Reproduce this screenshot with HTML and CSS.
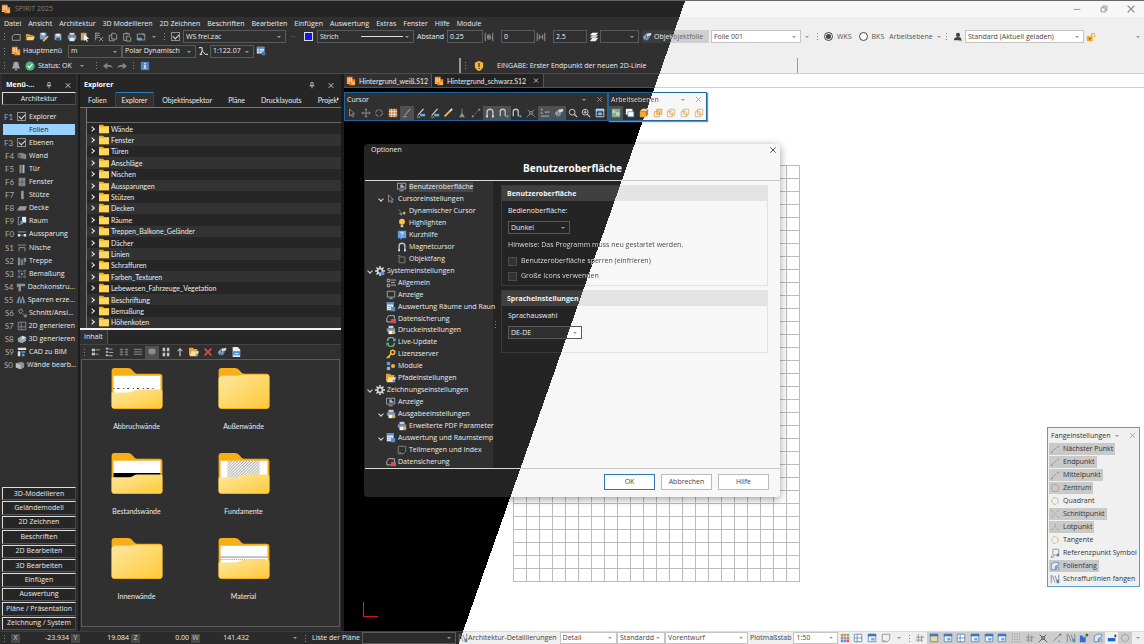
FILE: index.html
```html
<!DOCTYPE html>
<html lang="de">
<head>
<meta charset="utf-8">
<title>SPIRIT 2025</title>
<link rel="stylesheet" href="styles.css">
</head>
<body>
<svg class="sprite" aria-hidden="true">
  <symbol id="logo" viewBox="0 0 12 12"><path fill="#f08a24" d="M1 1h7v3h3v7H4V9H1z"/><path stroke="#fff" stroke-width=".8" d="M2.500 2.500v5M4.500 2.500v5M6.500 2.500v5M1 9h3"/><circle cx="8.700" cy="8.700" r="2" fill="#ffb45c"/></symbol>
  <symbol id="new" viewBox="0 0 12 12"><path fill="none" stroke="currentColor" d="M4 3h7v7H1.500V5z"/></symbol>
  <symbol id="open" viewBox="0 0 12 12"><path fill="#d9962a" d="M1 2.500h4l1 1h4V5H3L1 10z"/><path fill="#ffd479" d="M3.200 5.500H12L10 10H1.500z"/></symbol>
  <symbol id="save" viewBox="0 0 12 12"><path fill="#8fa9c9" d="M2 2h8v8H3L2 9z"/><path fill="#e9eef5" d="M4 2h4v3H4z"/><path fill="#35506f" d="M4 7h4v3H4z"/></symbol>
  <symbol id="saveas" viewBox="0 0 12 12"><path fill="#6f9bd1" d="M1 1h8v8H2L1 8z"/><path fill="#e9eef5" d="M3 1h4v3H3z"/><path stroke="#ffc04d" stroke-width="1.800" d="M5 11l6-6"/></symbol>
  <symbol id="print" viewBox="0 0 12 12"><path fill="#c8d2dd" d="M3 1h6v3H3z"/><path fill="#7d91aa" d="M1 4h10v5H1z"/><path fill="#e9eef5" d="M3 7h6v4H3z"/><path fill="#4f8fdb" d="M8 5h2v1H8z"/></symbol>
  <symbol id="printset" viewBox="0 0 12 12"><path fill="#c8d2dd" d="M3 1h6v3H3z"/><path fill="#8797aa" d="M1 4h10v4H1z"/><path fill="#f2f5f8" d="M3 7h5v4H3z"/><circle cx="9.300" cy="9" r="2" fill="#e8b04c"/></symbol>
  <symbol id="pastecur" viewBox="0 0 12 12"><path fill="#c9a46a" d="M1 1h7v9H1z"/><path fill="#fff" d="M5 3l6 5-3 .3 1.500 3-1.300.5L7 9l-2 1.500z"/></symbol>
  <symbol id="cutx" viewBox="0 0 12 12"><path fill="none" stroke="currentColor" d="M2 1.500h5M2 4h5M2 6.500h3M2 1v9M6 6l5 5M11 6l-5 5"/></symbol>
  <symbol id="copy" viewBox="0 0 12 12"><path fill="none" stroke="currentColor" d="M4.500 1.500h4l2 2v5h-6zM4 4H1.500v6.500h6V9"/></symbol>
  <symbol id="paste" viewBox="0 0 12 12"><path fill="none" stroke="currentColor" d="M5 10H2V2h7v2M4 1.500h3M5.500 5h3l2 2v4h-5z"/></symbol>
  <symbol id="export" viewBox="0 0 12 12"><path fill="none" stroke="currentColor" d="M1.500 2.500h9v7h-9z"/><path fill="#6f9bd1" d="M2 7h5v3H2zM8 1l3 3H8z"/></symbol>
  <symbol id="bwide" viewBox="0 0 12 12"><path fill="none" stroke="currentColor" d="M1.500 1v10M10.500 1v10M4.500 3.500h2a1 1 0 010 2.500h-2zM4.500 6h2.500a1 1 0 010 2.500h-2.500z"/></symbol>
  <symbol id="hwide" viewBox="0 0 12 12"><path fill="none" stroke="currentColor" d="M1.500 1v10M10.500 1v10M4 3v6M8 3v6M4 6h4"/></symbol>
  <symbol id="layers" viewBox="0 0 12 12"><path fill="#fff" d="M4 1h7L8 4H1z"/><path fill="#d5dde2" d="M4 4h7L8 7H1z"/><path fill="#e6ece6" d="M4 7h7l-3 4H1z"/></symbol>
  <symbol id="folie" viewBox="0 0 12 12"><path fill="#8fa0ad" d="M1 6l4-4v5l-2 3z"/><path fill="#c4d9ea" d="M5 2l6-1v3L6 6z"/><path fill="#5e93c4" d="M5 6l5-1-3 5H4z"/></symbol>
  <symbol id="person" viewBox="0 0 12 12"><circle cx="6" cy="3.500" r="2.500" fill="#444"/><path fill="#444" d="M1 10c0-3 2-4 5-4s4 1 4 3v1z"/><path stroke="#4fae5a" d="M7 10.500h4"/></symbol>
  <symbol id="lock" viewBox="0 0 12 12"><path fill="#f0a92c" d="M1 5h7v6H1z"/><path fill="none" stroke="#f0a92c" stroke-width="1.300" d="M6.500 5V3.500a2 2 0 014 0V6"/><circle cx="4.500" cy="8" r="1" fill="#8a5a0a"/></symbol>
  <symbol id="scale" viewBox="0 0 12 12"><path fill="none" stroke="currentColor" stroke-width="1.200" d="M1 2h4v4l-2 4M5 6l4 4h3M2 10h3"/></symbol>
  <symbol id="tableset" viewBox="0 0 12 12"><path fill="#dfe7ef" d="M1 1h9v8H1z"/><path fill="#4f8fdb" d="M1 1h9v2.500H1z"/><path stroke="#778" stroke-width=".8" d="M1 6h9M4 3v6"/><circle cx="9" cy="9" r="2.500" fill="#3d79bd"/></symbol>
  <symbol id="bell" viewBox="0 0 12 12"><path fill="#a5a5a5" d="M6 1c3 0 3.500 2 3.500 5L11 9H1l1.500-3C2.500 3 3 1 6 1zM4.500 9.500h3V11h-3z"/></symbol>
  <symbol id="ok" viewBox="0 0 12 12"><circle cx="6" cy="6" r="5.500" fill="#49b97a"/><path fill="none" stroke="#fff" stroke-width="1.500" d="M3.300 6l2 2 3.500-4"/></symbol>
  <symbol id="undo" viewBox="0 0 12 12"><path fill="#858585" d="M0 6l5-4v2.500c4 0 6 1 7 4-2-1.500-4-1.500-7-1.500V10z"/></symbol>
  <symbol id="redo" viewBox="0 0 12 12"><path fill="#858585" d="M12 6L7 2v2.500c-4 0-6 1-7 4C2 7 4 7 7 7v3z"/></symbol>
  <symbol id="info" viewBox="0 0 12 12"><path fill="#4c84c4" d="M1 1h10v10H1z"/><path fill="#fff" d="M5.300 2h1.500v1.500H5.300zM4.500 4.500h2.300V8H8v1H4.300V8h1V5.500h-.8z"/></symbol>
  <symbol id="warn" viewBox="0 0 12 12"><path fill="#f3b63b" d="M6 0l5 2v4c0 3-2 5-5 6-3-1-5-3-5-6V2z"/><path fill="#333" d="M5.300 2.500h1.500v4.500H5.300zM5.300 8h1.500v1.500H5.300z"/></symbol>
  <symbol id="pin" viewBox="0 0 12 12"><path fill="none" stroke="currentColor" stroke-width="1.200" d="M4 1h4v5H4zM2 6.500h8M6 7v4"/></symbol>
  <symbol id="close" viewBox="0 0 12 12"><path fill="none" stroke="currentColor" stroke-width="1.500" d="M2 2l8 8M10 2l-8 8"/></symbol>
  <symbol id="min" viewBox="0 0 12 12"><path stroke="currentColor" d="M2 6.500h8"/></symbol>
  <symbol id="restore" viewBox="0 0 12 12"><path fill="none" stroke="currentColor" d="M2.500 4.500h5v5h-5zM4.500 4V2.500h5v5H8"/></symbol>
  <symbol id="wall" viewBox="0 0 12 12"><path fill="#85898e" d="M1 3l4-1 6 2v6l-5-1-5-1z"/><path fill="#63676c" d="M1 3l4 1v5L1 8z"/></symbol>
  <symbol id="door" viewBox="0 0 12 12"><path fill="#8c9094" d="M3 1h2.500v10H3z"/><path fill="#aeb3b8" d="M6.500 1H9v10H6.500z"/></symbol>
  <symbol id="win" viewBox="0 0 12 12"><path fill="#85898e" d="M2 1h8v10H2z"/><path stroke="#5b5f63" d="M6 1v10M2 6h8"/></symbol>
  <symbol id="column" viewBox="0 0 12 12"><path fill="#989ca0" d="M5 1h3v10H5z"/></symbol>
  <symbol id="slab" viewBox="0 0 12 12"><path fill="#989ca0" d="M3 4h9l-2 5H0z"/></symbol>
  <symbol id="room" viewBox="0 0 12 12"><path fill="none" stroke="#9aa" d="M4 1.500H1.500v9H4"/><path fill="#d9e6f2" d="M6 1h5v7H6z"/><path fill="#5c9bd8" d="M4 6h3v4H4z"/></symbol>
  <symbol id="opening" viewBox="0 0 12 12"><path stroke="#aaa" d="M1 3.500h10"/><path fill="#d9e6f2" d="M1 6h3v3H1zM8 6h3v3H8z"/><path stroke="#5c9bd8" d="M4 7.500h4"/></symbol>
  <symbol id="niche" viewBox="0 0 12 12"><path fill="none" stroke="#9aa0a8" d="M1 2.500h10M2.500 10V5.500h7V10"/></symbol>
  <symbol id="stairs" viewBox="0 0 12 12"><path fill="#858a92" d="M1 2h3v9H1zM5 4h2v7H5zM8 2h3v5H9v4H8z"/></symbol>
  <symbol id="dim" viewBox="0 0 12 12"><path fill="none" stroke="#7fa7d3" stroke-dasharray="2 1" d="M1 2.500h10M1 9.500h10M2.500 1v10M9.500 1v10"/><path fill="#b9c6d4" d="M5 5h2v2H5z"/></symbol>
  <symbol id="roof" viewBox="0 0 12 12"><path fill="#8a8f95" d="M1 2h10v3H6v6H3V6H1z"/></symbol>
  <symbol id="rafter" viewBox="0 0 12 12"><path fill="none" stroke="#8da6c8" d="M1 10L4 2l2 8 2-8 3 8M3 10V4M9 10V5"/></symbol>
  <symbol id="section" viewBox="0 0 12 12"><path fill="none" stroke="#a5abb2" d="M2 3l3-2 2 3-3 3zM7 7l4 3M8 10.500h3V7"/></symbol>
  <symbol id="gen2d" viewBox="0 0 12 12"><path fill="none" stroke="#9299a5" d="M1.500 1.500h9v9h-9zM5 2v5h5M2 7h3v3"/></symbol>
  <symbol id="gen3d" viewBox="0 0 12 12"><path fill="#9aa5b0" d="M1 5l5-3 5 2v4l-5 3-5-2z"/><path fill="#d7dee5" d="M6 2l5 2-5 3z"/></symbol>
  <symbol id="bim" viewBox="0 0 12 12"><path fill="#d8e0e8" d="M1 1h10v2.500H1zM1 5h3v6H1z"/><path fill="#5c9bd8" d="M5 5h5v2H5zM6 8h3v3H6z"/></symbol>
  <symbol id="editwall" viewBox="0 0 12 12"><path fill="#8c9094" d="M1 4l7-2 3 2v5l-4 2-6-2z"/><path fill="#b7bcc1" d="M1 4l6 2v5L1 9z"/></symbol>
  <symbol id="folder" viewBox="0 0 12 12"><path fill="#f5b21c" d="M0 1h5l1 1.500h6V11H0z"/><path fill="#ffd65c" d="M0 3.500h12V11H0z"/></symbol>
  <symbol id="list1" viewBox="0 0 12 12"><path fill="#c5c5c5" d="M1 2h4v3H1zM1 7h4v3H1zM6 3h5v1H6zM6 8h3v1H6z"/></symbol>
  <symbol id="list2" viewBox="0 0 12 12"><path fill="#c5c5c5" d="M1 1h3v2H1zM1 5h3v2H1zM1 9h3v2H1zM5 2h4v1H5zM5 6h5v1H5zM5 10h4v1H5z"/></symbol>
  <symbol id="list3" viewBox="0 0 12 12"><path fill="#777" d="M1 2h4v2H1zM7 2h4v2H7zM1 5h4v2H1zM7 5h4v2H7zM1 8h4v2H1zM7 8h4v2H7z"/></symbol>
  <symbol id="list4" viewBox="0 0 12 12"><path fill="#777" d="M1 2h10v1.500H1zM1 5h10v1.500H1zM1 8h10v1.500H1z"/></symbol>
  <symbol id="preview" viewBox="0 0 12 12"><path fill="#8e8e8e" d="M2 2h8v6H2zM4 9h4v1H4z"/></symbol>
  <symbol id="grid4" viewBox="0 0 12 12"><path fill="#c5c5c5" d="M2 1h3v4H2zM7 1h3v4H7zM2 7h3v4H2zM7 7h3v4H7z"/></symbol>
  <symbol id="up" viewBox="0 0 12 12"><path fill="none" stroke="currentColor" stroke-width="1.200" d="M6 11V2M3 5l3-3 3 3"/></symbol>
  <symbol id="delete" viewBox="0 0 12 12"><path stroke="#e0464c" stroke-width="2.200" d="M2 2l8 8M10 2l-8 8"/></symbol>
  <symbol id="docimg" viewBox="0 0 12 12"><path fill="#e8edf2" d="M2 0h6l3 3v9H2z"/><path fill="#4f8fdb" d="M2 5h9v5H2z"/><path stroke="#fff" d="M4 8h5"/></symbol>
  <symbol id="pointer" viewBox="0 0 12 12"><path fill="none" stroke="#999" d="M3 1l6 6H6.500l1.500 3-1.500.5L5 8 3 9.500z"/></symbol>
  <symbol id="move" viewBox="0 0 12 12"><path fill="none" stroke="currentColor" d="M6 1v10M1 6h10M4.500 2.500L6 1l1.500 1.500M4.500 9.500L6 11l1.500-1.500M2.500 4.500L1 6l1.500 1.500M9.500 4.500L11 6 9.500 7.500"/></symbol>
  <symbol id="rot" viewBox="0 0 12 12"><circle cx="6" cy="6" r="4" fill="none" stroke="currentColor" stroke-dasharray="5 1.300"/></symbol>
  <symbol id="gridor" viewBox="0 0 12 12"><path fill="#c98d55" d="M1 1h10v10H1z"/><path stroke="#f2e6d8" stroke-width=".9" d="M1 4.300h10M1 7.600h10M4.300 1v10M7.600 1v10"/></symbol>
  <symbol id="pen" viewBox="0 0 12 12"><path fill="none" stroke="currentColor" stroke-width="1.300" d="M3 9l7-8M1 10.500h5"/></symbol>
  <symbol id="penline" viewBox="0 0 12 12"><path stroke="#e8dfcf" stroke-width="1.300" d="M2 9l7-8"/><path fill="#6ba7ec" d="M5 7h6v3H5z"/><path stroke="#e6b04a" d="M1 11h4"/></symbol>
  <symbol id="penor" viewBox="0 0 12 12"><path stroke="#ffb938" stroke-width="2.200" d="M2 10l6-6"/><path stroke="#f3e0b0" stroke-width="2.200" d="M8 4l3-3"/></symbol>
  <symbol id="broom" viewBox="0 0 12 12"><path fill="#8f8f8f" d="M5.500 1h1v5l3 5h-7l3-5z"/></symbol>
  <symbol id="dash" viewBox="0 0 12 12"><path fill="none" stroke="currentColor" stroke-dasharray="2 2" d="M2 10l8-8"/><path fill="currentColor" d="M1 9h2v2H1zM9 1h2v2H9z"/></symbol>
  <symbol id="magnet" viewBox="0 0 12 12"><path fill="none" stroke="#b8c2d0" stroke-width="1.700" d="M2.500 11V5a3.500 3.500 0 017 0v6"/><path stroke="#fff" stroke-width="1.700" d="M2.500 9v2M9.500 9v2"/></symbol>
  <symbol id="magdot" viewBox="0 0 12 12"><path fill="none" stroke="#b8c2d0" stroke-width="1.600" d="M1.500 10V4.500a3 3 0 016 0V10"/><circle cx="10" cy="10" r="1.300" fill="#6ba7ec"/></symbol>
  <symbol id="cross" viewBox="0 0 12 12"><path fill="none" stroke="currentColor" d="M2 2l3 3M10 2L7 5M5 7l-4 4M7 7l4 4M4.500 4.500h3v3h-3z"/></symbol>
  <symbol id="snap" viewBox="0 0 12 12"><path fill="#7fa7d3" d="M1 1h2v2H1zM1 5h2v2H1zM1 9h10v1.500H1zM6 4h2v2H6zM9 4h2v2H9z"/></symbol>
  <symbol id="zoom" viewBox="0 0 12 12"><circle cx="5" cy="5" r="3.500" fill="none" stroke="#c4c4c4" stroke-width="1.200"/><path stroke="#c4c4c4" stroke-width="1.500" d="M7.500 7.500L11 11"/></symbol>
  <symbol id="zoomin" viewBox="0 0 12 12"><circle cx="5" cy="5" r="3.500" fill="none" stroke="#c4c4c4" stroke-width="1.200"/><path stroke="#c4c4c4" stroke-width="1.300" d="M7.500 7.500L11 11M3 5h4M5 3v4"/></symbol>
  <symbol id="viewbox" viewBox="0 0 12 12"><path fill="#7fb2e6" d="M1 1h10v3H1z"/><path fill="none" stroke="#d8e4f0" d="M1.500 1.500h9v9h-9z"/><ellipse cx="6" cy="7" rx="3" ry="2" fill="#7fb2e6"/></symbol>
  <symbol id="green" viewBox="0 0 12 12"><path fill="#7fb28e" d="M1 1h10v10H1z"/><path fill="#bcdcc4" d="M2 3h3v3H2zM6 5h4v4H6z"/></symbol>
  <symbol id="planes" viewBox="0 0 12 12"><path fill="#e9f1fa" d="M1 1h8v7H1z"/><path fill="#fff" stroke="#6b98cf" d="M3.500 4.500h7v6h-7z"/></symbol>
  <symbol id="cubefull" viewBox="0 0 12 12"><path fill="#eda93c" d="M1 4h7v7H1z"/><path fill="#f8d08c" d="M1 4l3-3h7L8 4z"/><path fill="#bf7f24" d="M8 4l3-3v7l-3 3z"/></symbol>
  <symbol id="cube" viewBox="0 0 12 12"><path fill="#fbd28a" stroke="#d99a3c" d="M4.500 1.500h6v6h-6z"/><path fill="none" stroke="#d99a3c" d="M1.500 4.500h6v6h-6z"/></symbol>
  <symbol id="cubeline" viewBox="0 0 12 12"><path fill="none" stroke="#dfae6a" d="M1.500 4.500h6v6h-6zM4.500 1.500h6v6h-6zM1.500 4.500l3-3M7.500 10.500l3-3"/></symbol>
  <symbol id="monitor" viewBox="0 0 12 12"><path fill="none" stroke="#b5b5b5" d="M1.500 1.500h9v7h-9zM4 10.500h4M6 9v1"/></symbol>
  <symbol id="monitorset" viewBox="0 0 12 12"><path fill="none" stroke="#b5b5b5" d="M.5 1.500h10v7H.5zM3 10.500h5"/><path fill="#9db9dc" d="M4 3h3v2h2v2H4z"/></symbol>
  <symbol id="dyn" viewBox="0 0 12 12"><path fill="none" stroke="#76808c" d="M2 4l4 5M2 9h3"/><path fill="#e8b04c" d="M7 7h3v3H7z"/><path fill="#6ba7ec" d="M4 9h2v2H4z"/></symbol>
  <symbol id="bulb" viewBox="0 0 12 12"><circle cx="6" cy="4.500" r="3.500" fill="#ffbf4d"/><path fill="#d8d8d8" d="M4.500 8.500h3V11h-3z"/></symbol>
  <symbol id="help" viewBox="0 0 12 12"><path fill="#5da0ea" d="M1 1h10v9H6l-2 2v-2H1z"/><path fill="none" stroke="#fff" stroke-width="1.100" d="M4.500 4a1.500 1.500 0 113 0c0 1-1.500 1-1.500 2M6 7v1"/></symbol>
  <symbol id="square" viewBox="0 0 12 12"><path fill="none" stroke="#8a8a8a" d="M2.500 3.500h7v7h-7zM1 2h3"/></symbol>
  <symbol id="gear" viewBox="0 0 12 12"><circle cx="6" cy="6" r="3" fill="none" stroke="#d5dae0" stroke-width="2"/><path stroke="#d5dae0" stroke-width="1.800" d="M6 0v2.500M6 9.500V12M0 6h2.500M9.500 6H12M1.800 1.800l1.700 1.700M8.500 8.500l1.700 1.700M10.200 1.800L8.500 3.500M3.500 8.500l-1.700 1.700"/></symbol>
  <symbol id="gearblue" viewBox="0 0 12 12"><use href="#gear"/><circle cx="9" cy="9" r="2.500" fill="#4f8fdb"/></symbol>
  <symbol id="options" viewBox="0 0 12 12"><path fill="none" stroke="#c4c4c4" d="M1.500 1.500h3v3h-3zM1.500 7.500h3v3h-3zM6 2.500h6M6 5.500h5M6 8.500h6"/></symbol>
  <symbol id="eval" viewBox="0 0 12 12"><path fill="#e6ecf3" d="M1 0h8v10H1z"/><path fill="#4f8fdb" d="M1 0h8v3H1zM6 6h5v5H6z"/><path stroke="#8aa" d="M2 5.500h5M2 8h3"/></symbol>
  <symbol id="backup" viewBox="0 0 12 12"><path fill="none" stroke="#c9c9c9" d="M1 9.500V5l2-3h7v4M1 9.500h5"/><path fill="#e2474d" d="M6 6h6v5H6z"/></symbol>
  <symbol id="refresh" viewBox="0 0 12 12"><path fill="none" stroke="#5fb386" stroke-width="1.800" d="M2 5a4 4 0 018-1M10 7a4 4 0 01-8 1"/><path fill="#5fb386" d="M11.500 1v4H8zM.5 11V7H4z"/></symbol>
  <symbol id="key" viewBox="0 0 12 12"><circle cx="8" cy="4" r="2.500" fill="none" stroke="#ffb938" stroke-width="1.800"/><path stroke="#ffb938" stroke-width="1.800" d="M6 6l-5 5M3 9l1.500 1.500"/></symbol>
  <symbol id="modules" viewBox="0 0 12 12"><path fill="#6b9bd4" d="M1 1h4v4H1z"/><path fill="#9fb4cc" d="M1 7h4v4H1z"/><circle cx="8.500" cy="6" r="2.500" fill="#f0b04a"/></symbol>
  <symbol id="folderset" viewBox="0 0 12 12"><path fill="#e1a33c" d="M0 1h5l1 1.500h4V10H0z"/><path fill="#ffdf94" d="M3 5h9l-2 6H1z"/><path fill="#5c9bd8" d="M8 8h3v3H8z"/></symbol>
  <symbol id="note" viewBox="0 0 12 12"><path fill="none" stroke="#8f8f8f" d="M1.500 1.500h9v6l-3 3h-6zM3 9l3 1"/></symbol>
  <symbol id="near" viewBox="0 0 12 12"><path fill="none" stroke="#a69583" d="M3 9l5-5"/><path fill="#a69583" d="M1 9h2v2H1zM9 2h2v2H9z"/></symbol>
  <symbol id="circ" viewBox="0 0 12 12"><circle cx="6" cy="6" r="4.500" fill="none" stroke="#a69c90"/></symbol>
  <symbol id="quad" viewBox="0 0 12 12"><circle cx="6" cy="6" r="4" fill="none" stroke="#c9a56a" stroke-dasharray="4 1"/></symbol>
  <symbol id="inter" viewBox="0 0 12 12"><path fill="none" stroke="#999" d="M1 1l3 3M11 1L8 4M1 11l3-3M11 11L8 8M5 6h2"/></symbol>
  <symbol id="perp" viewBox="0 0 12 12"><path fill="none" stroke="#999" d="M6 2v5M1 10l3-2M11 10L8 8"/></symbol>
  <symbol id="refpt" viewBox="0 0 12 12"><path fill="none" stroke="#8a8a8a" d="M3.500 1.500h7v7h-7zM1 11h4M2 9v3"/><path fill="#5c80b0" d="M8 7h3v3H8z"/></symbol>
  <symbol id="foliefang" viewBox="0 0 12 12"><path fill="#dbe8f5" stroke="#5b86b8" d="M1.500 3.500l4-2h5v3l-4 2v4h-5z"/><path fill="none" stroke="#5b86b8" d="M7.500 11V8.500a1.500 1.500 0 013 0V11"/></symbol>
  <symbol id="hatch" viewBox="0 0 12 12"><path fill="none" stroke="#6f7f93" d="M1.500 1v10M3 2l3 8M6 2l3 8M10.500 1v10"/><path fill="#5b86b8" d="M8 7h3v4H8z"/></symbol>
  <symbol id="palette" viewBox="0 0 12 12"><path fill="#e2803f" d="M1 1h5v5H1z"/><path fill="#6abf69" d="M6 1h5v5H6z"/><path fill="#5c8fe0" d="M1 6h5v5H1z"/><path fill="#e25b50" d="M6 6h5v5H6z"/><path stroke="#fff" stroke-width=".6" d="M1 4.300h10M1 7.600h10M4.300 1v10M7.600 1v10"/></symbol>
  <symbol id="win3" viewBox="0 0 12 12"><path fill="#fff" stroke="#5d83b5" d="M1.500 1.500h9v9h-9zM5 2v9M2 6h9"/></symbol>
  <symbol id="winb" viewBox="0 0 12 12"><path fill="#eef4fb" stroke="#5b86bd" d="M1.500 1.500h9v9h-9z"/><path fill="#3f78c0" d="M1 1h10v3H1z"/><path fill="#7ea6d6" d="M5 6h4v3H5z"/></symbol>
  <symbol id="winy" viewBox="0 0 12 12"><path fill="#f6d98b" stroke="#5b86bd" d="M1.500 1.500h9v9h-9z"/><path fill="#3f78c0" d="M1 1h10v3H1z"/></symbol>
  <symbol id="dots" viewBox="0 0 12 12"><path fill="none" stroke="#777" stroke-dasharray="1 2" d="M1.500 1v11M4.500 1v11M7.500 1v11M10.500 1v11"/></symbol>
  <symbol id="hash" viewBox="0 0 12 12"><path fill="none" stroke="#888" d="M4 1v10M8 3v8M1 5h10M1 8.500h8"/></symbol>
  <symbol id="edge" viewBox="0 0 12 12"><path fill="none" stroke="#6e7f96" d="M2 10l3-4 4-3M7 9l3 2"/><path fill="#555" d="M9 1h2v2H9z"/></symbol>
  <symbol id="bluewin" viewBox="0 0 12 12"><path fill="#2f6fd0" d="M1 3h3l2 3 2-3v8H1z"/><path fill="#555" d="M8 1h3v3H8z"/></symbol>
  <symbol id="screen" viewBox="0 0 12 12"><path fill="#1f62d6" d="M1 6h9v4H1z"/><path fill="#333" d="M9 2h2v3H9z"/></symbol>
  <linearGradient id="front" x1="0" y1="0" x2="1" y2="1"><stop offset="0" stop-color="#fde7a0"/><stop offset="1" stop-color="#ffca38"/></linearGradient>
  <pattern id="diag" width="3" height="3" patternUnits="userSpaceOnUse"><path stroke="#555" stroke-width=".7" d="M0 3l3-3"/></pattern>
  <symbol id="big" viewBox="0 0 54 44"><path fill="#f7ae17" d="M1 4q0-3 3-3h14q3 0 5 3t4 3h23q3 0 3 3v30q0 3-3 3H4q-3 0-3-3z"/></symbol>
  <symbol id="fclosed" viewBox="0 0 54 44"><use href="#big" width="54" height="44"/><path fill="#fff3cf" d="M3 9h20l3-1v2H3z"/><path fill="url(#front)" d="M1 12q0-2 2-2h15l6-2h27q2 0 2 2v30q0 2-2 2H3q-2 0-2-2z"/></symbol>
  <symbol id="ffront" viewBox="0 0 54 44"><path fill="url(#front)" d="M1 26h17q3 0 5-1.500t5-1.500h23q2 0 2 2v15q0 2-2 2H3q-2 0-2-2z"/></symbol>
</svg>

<header class="titlebar split">
  <svg class="i"><use href="#logo"/></svg><span class="apptitle">SPIRIT 2025</span>
  <div class="wincontrols">
    <button aria-label="Minimieren"><svg class="i"><use href="#min"/></svg></button>
    <button aria-label="Wiederherstellen"><svg class="i"><use href="#restore"/></svg></button>
    <button aria-label="Schließen"><svg class="i"><use href="#close"/></svg></button>
  </div>
</header>

<div class="ribbon split">
  <nav class="menubar">
    <button>Datei</button><button>Ansicht</button><button>Architektur</button><button>3D Modellieren</button><button>2D Zeichnen</button><button>Beschriften</button><button>Bearbeiten</button><button>Einfügen</button><button>Auswertung</button><button>Extras</button><button>Fenster</button><button>Hilfe</button><button>Module</button>
  </nav>
  <div class="toolbar">
    <div class="group g-file"><i class="grip"></i>
      <button class="tb" aria-label="Neu"><svg class="i"><use href="#new"/></svg></button>
      <button class="tb" aria-label="Öffnen"><svg class="i"><use href="#open"/></svg></button>
      <button class="tb" aria-label="Speichern unter"><svg class="i"><use href="#saveas"/></svg></button>
      <button class="tb" aria-label="Speichern"><svg class="i"><use href="#save"/></svg></button>
      <button class="tb" aria-label="Drucken"><svg class="i"><use href="#print"/></svg></button>
      <button class="tb" aria-label="Auswahl einfügen"><svg class="i"><use href="#pastecur"/></svg></button>
      <button class="tb" aria-label="Ausschneiden"><svg class="i"><use href="#cutx"/></svg></button>
      <button class="tb" aria-label="Kopieren"><svg class="i"><use href="#copy"/></svg></button>
      <button class="tb" aria-label="Einfügen"><svg class="i"><use href="#paste"/></svg></button>
      <button class="tb" aria-label="Exportieren"><svg class="i"><use href="#export"/></svg></button>
      <i class="caret"></i></div>
    <div class="group g-pen"><i class="grip"></i><input class="check" type="checkbox" checked aria-label="Stift aktiv">
      <span class="combo grow"><select aria-label="Stiftdatei"><option>WS frei.zac</option></select></span>
      <button class="tb dim">···</button></div>
    <div class="group g-line"><i class="swatch"></i><span class="combo grow stroke"><select aria-label="Linienart"><option>Strich</option></select></span></div>
    <div class="group g-dist"><label for="dist">Abstand</label><input class="field" id="dist" value="0.25"></div>
    <div class="group g-val"><label for="bw" aria-label="Breite"><svg class="i"><use href="#bwide"/></svg></label><input class="field" id="bw" value="0"></div>
    <div class="group g-val"><label for="hw" aria-label="Höhe"><svg class="i"><use href="#hwide"/></svg></label><input class="field" id="hw" value="2.5"></div>
    <div class="group g-layer"><svg class="i"><use href="#layers"/></svg><span class="combo grow"><select aria-label="Ebene"><option></option></select></span></div>
    <button class="objfolie split"><svg class="i"><use href="#folie"/></svg><span>Objek<span class="on-light">bjektfolie</span></span></button>
    <div class="group g-folie light"><span class="combo grow"><select aria-label="Folie"><option>Folie 001</option></select></span><i class="caret"></i></div>
    <div class="group g-coord light"><i class="grip"></i><label><input class="radio" type="radio" name="cs" checked>WKS</label><label><input class="radio" type="radio" name="cs">BKS</label><span>Arbeitsebene</span><i class="caret"></i></div>
    <div class="group g-user light"><i class="grip"></i><svg class="i"><use href="#person"/></svg><span class="combo grow"><select aria-label="Profil"><option>Standard (Aktuell geladen)</option></select></span><svg class="i"><use href="#lock"/></svg></div>
    <i class="caret light end"></i>
  </div>
  <div class="toolbar mid">
    <i class="grip"></i><button class="tb" aria-label="SPIRIT"><svg class="i"><use href="#logo"/></svg></button>
    <label class="w-menu" for="unit">Hauptmenü</label>
    <span class="combo w-unit"><select id="unit"><option>m</option></select></span><span class="combo w-polar"><select aria-label="Koordinaten"><option>Polar Dynamisch</option></select></span>
    <button class="tb" aria-label="Maßstab"><svg class="i"><use href="#scale"/></svg></button>
    <span class="combo w-scale"><select aria-label="Zoomfaktor"><option>1:122.07</option></select></span>
    <button class="tb" aria-label="Tabelle"><svg class="i"><use href="#tableset"/></svg></button>
  </div>
  <div class="toolbar">
    <div class="group g-status"><i class="grip"></i>
      <button class="tb" aria-label="Meldungen"><svg class="i"><use href="#bell"/></svg></button>
      <svg class="i ic"><use href="#ok"/></svg><span>Status: OK</span><i class="caret wide"></i><i class="grip"></i>
      <button class="tb" aria-label="Rückgängig"><svg class="i"><use href="#undo"/></svg></button>
      <button class="tb" aria-label="Wiederholen"><svg class="i"><use href="#redo"/></svg></button><i class="grip"></i>
      <button class="tb" aria-label="Info"><svg class="i"><use href="#info"/></svg></button></div>
    <div class="prompt"><i class="grip"></i><svg class="i"><use href="#warn"/></svg><span>EINGABE: Erster Endpunkt der neuen 2D-Linie</span></div>
  </div>
</div>

<main class="main">
  <aside class="menupanel">
    <div class="phead"><b>Menü-...</b><svg class="i"><use href="#pin"/></svg><button aria-label="Schließen"><svg class="i"><use href="#close"/></svg></button></div>
    <button class="mbtn">Architektur</button>
    <div class="mlist">
      <label class="mrow"><kbd>F1</kbd><input class="check" type="checkbox" checked>Explorer</label>
      <button class="mrow sel"><kbd></kbd><i></i>Folien</button>
      <label class="mrow"><kbd>F3</kbd><input class="check" type="checkbox" checked>Ebenen</label>
      <button class="mrow"><kbd>F4</kbd><svg class="i"><use href="#wall"/></svg>Wand</button>
      <button class="mrow"><kbd>F5</kbd><svg class="i"><use href="#door"/></svg>Tür</button>
      <button class="mrow"><kbd>F6</kbd><svg class="i"><use href="#win"/></svg>Fenster</button>
      <button class="mrow"><kbd>F7</kbd><svg class="i"><use href="#column"/></svg>Stütze</button>
      <button class="mrow"><kbd>F8</kbd><svg class="i"><use href="#slab"/></svg>Decke</button>
      <button class="mrow"><kbd>F9</kbd><svg class="i"><use href="#room"/></svg>Raum</button>
      <button class="mrow"><kbd>F0</kbd><svg class="i"><use href="#opening"/></svg>Aussparung</button>
      <button class="mrow"><kbd>S1</kbd><svg class="i"><use href="#niche"/></svg>Nische</button>
      <button class="mrow"><kbd>S2</kbd><svg class="i"><use href="#stairs"/></svg>Treppe</button>
      <button class="mrow"><kbd>S3</kbd><svg class="i"><use href="#dim"/></svg>Bemaßung</button>
      <button class="mrow"><kbd>S4</kbd><svg class="i"><use href="#roof"/></svg>Dachkonstru...</button>
      <button class="mrow"><kbd>S5</kbd><svg class="i"><use href="#rafter"/></svg>Sparren erze...</button>
      <button class="mrow"><kbd>S6</kbd><svg class="i"><use href="#section"/></svg>Schnitt/Ansi...</button>
      <button class="mrow"><kbd>S7</kbd><svg class="i"><use href="#gen2d"/></svg>2D generieren</button>
      <button class="mrow"><kbd>S8</kbd><svg class="i"><use href="#gen3d"/></svg>3D generieren</button>
      <button class="mrow"><kbd>S9</kbd><svg class="i"><use href="#bim"/></svg>CAD zu BIM</button>
      <button class="mrow"><kbd>S0</kbd><svg class="i"><use href="#editwall"/></svg>Wände bearb...</button>
    </div>
    <div class="mbuttons">
      <button class="mbtn">3D-Modellieren</button><button class="mbtn">Geländemodell</button><button class="mbtn">2D Zeichnen</button><button class="mbtn">Beschriften</button><button class="mbtn">2D Bearbeiten</button><button class="mbtn">3D Bearbeiten</button><button class="mbtn">Einfügen</button><button class="mbtn">Auswertung</button><button class="mbtn">Pläne / Präsentation</button><button class="mbtn">Zeichnung / System</button>
    </div>
  </aside>

  <section class="explorer">
    <div class="phead"><b>Explorer</b><svg class="i"><use href="#pin"/></svg><button aria-label="Schließen"><svg class="i"><use href="#close"/></svg></button></div>
    <div class="tabs"><button>Folien</button><button class="active">Explorer</button><button>Objektinspektor</button><button>Pläne</button><button>Drucklayouts</button><button class="last">Projek</button><span class="scroll"><i></i><i></i></span></div>
    <div class="treebox">
      <div class="gutter"></div>
      <div class="treecol"><div class="filter"></div>
      <ul class="tree">
        <li><svg class="i"><use href="#folder"/></svg>Wände</li><li><svg class="i"><use href="#folder"/></svg>Fenster</li><li><svg class="i"><use href="#folder"/></svg>Türen</li><li><svg class="i"><use href="#folder"/></svg>Anschläge</li><li><svg class="i"><use href="#folder"/></svg>Nischen</li><li><svg class="i"><use href="#folder"/></svg>Aussparungen</li><li><svg class="i"><use href="#folder"/></svg>Stützen</li><li><svg class="i"><use href="#folder"/></svg>Decken</li><li><svg class="i"><use href="#folder"/></svg>Räume</li><li><svg class="i"><use href="#folder"/></svg>Treppen_Balkone_Geländer</li><li><svg class="i"><use href="#folder"/></svg>Dächer</li><li><svg class="i"><use href="#folder"/></svg>Linien</li><li><svg class="i"><use href="#folder"/></svg>Schraffuren</li><li><svg class="i"><use href="#folder"/></svg>Farben_Texturen</li><li><svg class="i"><use href="#folder"/></svg>Lebewesen_Fahrzeuge_Vegetation</li><li><svg class="i"><use href="#folder"/></svg>Beschriftung</li><li><svg class="i"><use href="#folder"/></svg>Bemaßung</li><li><svg class="i"><use href="#folder"/></svg>Höhenkoten</li>
      </ul></div>
    </div>
    <div class="inhalt-tab"><button>Inhalt</button></div>
    <div class="inhalt-tools"><i class="grip"></i>
      <button class="tb" aria-label="Große Liste"><svg class="i"><use href="#list1"/></svg></button>
      <button class="tb" aria-label="Liste"><svg class="i"><use href="#list2"/></svg></button>
      <button class="tb" aria-label="Spalten"><svg class="i"><use href="#list3"/></svg></button>
      <button class="tb" aria-label="Details"><svg class="i"><use href="#list4"/></svg></button>
      <button class="tb pressed" aria-label="Vorschau"><svg class="i"><use href="#preview"/></svg></button>
      <button class="tb" aria-label="Kacheln"><svg class="i"><use href="#grid4"/></svg></button>
      <button class="tb" aria-label="Nach oben"><svg class="i"><use href="#up"/></svg></button>
      <button class="tb" aria-label="Ordner"><svg class="i"><use href="#folderset"/></svg></button>
      <button class="tb" aria-label="Löschen"><svg class="i"><use href="#delete"/></svg></button>
      <button class="tb" aria-label="Folie"><svg class="i"><use href="#folie"/></svg></button>
      <button class="tb" aria-label="Bild"><svg class="i"><use href="#docimg"/></svg></button>
    </div>
    <div class="files">
      <figure><svg class="big" viewBox="0 0 54 44"><use href="#big" width="54" height="44"/><path fill="#fff" d="M3 9h48v20H3z"/><path fill="none" stroke="#333" stroke-width="1.200" stroke-dasharray="1 3 2 4" d="M3 22h44"/><use href="#ffront" width="54" height="44"/></svg><figcaption>Abbruchwände</figcaption></figure>
      <figure><svg class="big" viewBox="0 0 54 44"><use href="#fclosed" width="54" height="44"/></svg><figcaption>Außenwände</figcaption></figure>
      <figure><svg class="big" viewBox="0 0 54 44"><use href="#big" width="54" height="44"/><path fill="#fff" d="M3 9h48v20H3z"/><path fill="#000" d="M3 21.500h48V26H3z"/><use href="#ffront" width="54" height="44"/></svg><figcaption>Bestandswände</figcaption></figure>
      <figure><svg class="big" viewBox="0 0 54 44"><use href="#big" width="54" height="44"/><path fill="#fff" d="M3 9h48v20H3z"/><path fill="url(#diag)" d="M10 9h33v20H10z"/><use href="#ffront" width="54" height="44"/></svg><figcaption>Fundamente</figcaption></figure>
      <figure><svg class="big" viewBox="0 0 54 44"><use href="#fclosed" width="54" height="44"/></svg><figcaption>Innenwände</figcaption></figure>
      <figure><svg class="big" viewBox="0 0 54 44"><use href="#big" width="54" height="44"/><path fill="#fff" d="M3 9h48v20H3z"/><path fill="none" stroke="#888" d="M3 20.500h48"/><path stroke="#999" stroke-dasharray="1 1" d="M3 23h46"/><use href="#ffront" width="54" height="44"/></svg><figcaption>Material</figcaption></figure>
    </div>
  </section>

  <section class="work">
    <div class="doctabs split">
      <button><svg class="i"><use href="#logo"/></svg>Hintergrund_weiß.S12</button>
      <button class="active"><svg class="i"><use href="#logo"/></svg>Hintergrund_schwarz.S12<svg class="i x"><use href="#close"/></svg></button>
    </div>
    <div class="canvas split">
      <div class="paper"></div>
      <svg class="axes" viewBox="0 0 16 16"><path stroke="#0a8a2a" d="M.5 0v15"/><path stroke="#e01010" d="M0 14.500h15"/></svg>

      <div class="win win-cursor">
        <div class="whead"><span>Cursor</span><i class="caret"></i><svg class="i x"><use href="#close"/></svg></div>
        <div class="wtools">
          <button><svg class="i"><use href="#pointer"/></svg></button><button><svg class="i"><use href="#move"/></svg></button><button><svg class="i"><use href="#rot"/></svg></button><button><svg class="i"><use href="#gridor"/></svg></button><button class="pressed"><svg class="i"><use href="#pen"/></svg></button><button><svg class="i"><use href="#penline"/></svg></button><button><svg class="i"><use href="#penline"/></svg></button><button><svg class="i"><use href="#penor"/></svg></button><button><svg class="i"><use href="#broom"/></svg></button><button><svg class="i"><use href="#dash"/></svg></button><button class="pressed"><svg class="i"><use href="#magnet"/></svg></button><button class="pressed"><svg class="i"><use href="#magdot"/></svg></button><button><svg class="i"><use href="#magdot"/></svg></button><button><svg class="i"><use href="#cross"/></svg></button><button class="pressed"><svg class="i"><use href="#snap"/></svg></button><button class="pressed"><svg class="i"><use href="#folie"/></svg></button><button><svg class="i"><use href="#zoom"/></svg></button><button><svg class="i"><use href="#zoomin"/></svg></button><button><svg class="i"><use href="#viewbox"/></svg></button>
        </div>
      </div>

      <div class="win win-planes split">
        <div class="whead"><span class="split-text">Arbeitsebenen</span><i class="caret"></i><svg class="i x"><use href="#close"/></svg></div>
        <div class="wtools">
          <button class="pressed"><svg class="i"><use href="#green"/></svg></button><button><svg class="i"><use href="#planes"/></svg></button><button><svg class="i"><use href="#cubefull"/></svg></button><button><svg class="i"><use href="#cube"/></svg></button><button><svg class="i"><use href="#cubeline"/></svg></button><button><svg class="i"><use href="#cubeline"/></svg></button><button><svg class="i"><use href="#cubeline"/></svg></button>
        </div>
      </div>

      <div class="win win-snap">
        <div class="whead"><span>Fangeinstellungen</span><i class="caret"></i><svg class="i x"><use href="#close"/></svg></div>
        <div class="snaps">
          <button class="on"><svg class="i"><use href="#near"/></svg>Nächster Punkt</button>
          <button class="on"><svg class="i"><use href="#near"/></svg>Endpunkt</button>
          <button class="on"><svg class="i"><use href="#near"/></svg>Mittelpunkt</button>
          <button class="on"><svg class="i"><use href="#circ"/></svg>Zentrum</button>
          <button><svg class="i"><use href="#quad"/></svg>Quadrant</button>
          <button class="on"><svg class="i"><use href="#inter"/></svg>Schnittpunkt</button>
          <button class="on"><svg class="i"><use href="#perp"/></svg>Lotpunkt</button>
          <button><svg class="i"><use href="#quad"/></svg>Tangente</button>
          <button><svg class="i"><use href="#refpt"/></svg>Referenzpunkt Symbol</button>
          <button class="on"><svg class="i"><use href="#foliefang"/></svg>Folienfang</button>
          <button><svg class="i"><use href="#hatch"/></svg>Schraffurlinien fangen</button>
        </div>
      </div>

      <div class="dialog split" role="dialog" aria-labelledby="dlg">
        <div class="dtitle"><span>Optionen</span><button aria-label="Schließen"><svg class="i"><use href="#close"/></svg></button></div>
        <h1 id="dlg">Benutzeroberfläche</h1>
        <div class="rule split"></div>
        <div class="dbody">
          <ul class="opts">
            <li class="l2 sel"><svg class="i"><use href="#monitorset"/></svg><span>Benutzeroberfläche</span></li>
            <li class="l1 openrow"><svg class="i"><use href="#pointer"/></svg>Cursoreinstellungen</li>
            <li class="l2"><svg class="i"><use href="#dyn"/></svg>Dynamischer Cursor</li>
            <li class="l2"><svg class="i"><use href="#bulb"/></svg>Highlighten</li>
            <li class="l2"><svg class="i"><use href="#help"/></svg>Kurzhilfe</li>
            <li class="l2"><svg class="i"><use href="#magnet"/></svg>Magnetcursor</li>
            <li class="l2"><svg class="i"><use href="#square"/></svg>Objektfang</li>
            <li class="l0 openrow"><svg class="i"><use href="#gearblue"/></svg>Systemeinstellungen</li>
            <li class="l1"><svg class="i"><use href="#options"/></svg>Allgemein</li>
            <li class="l1"><svg class="i"><use href="#monitor"/></svg>Anzeige</li>
            <li class="l1"><svg class="i"><use href="#eval"/></svg>Auswertung Räume und Raun</li>
            <li class="l1"><svg class="i"><use href="#backup"/></svg>Datensicherung</li>
            <li class="l1"><svg class="i"><use href="#printset"/></svg>Druckeinstellungen</li>
            <li class="l1"><svg class="i"><use href="#refresh"/></svg>Live-Update</li>
            <li class="l1"><svg class="i"><use href="#key"/></svg>Lizenzserver</li>
            <li class="l1"><svg class="i"><use href="#modules"/></svg>Module</li>
            <li class="l1"><svg class="i"><use href="#folderset"/></svg>Pfadeinstellungen</li>
            <li class="l0 openrow"><svg class="i"><use href="#gear"/></svg>Zeichnungseinstellungen</li>
            <li class="l1"><svg class="i"><use href="#monitorset"/></svg>Anzeige</li>
            <li class="l1 openrow"><svg class="i"><use href="#printset"/></svg>Ausgabeeinstellungen</li>
            <li class="l2"><svg class="i"><use href="#printset"/></svg>Erweiterte PDF Parameter</li>
            <li class="l1 openrow"><svg class="i"><use href="#eval"/></svg>Auswertung und Raumstemp</li>
            <li class="l2"><svg class="i"><use href="#note"/></svg>Teilmengen und Index</li>
            <li class="l1"><svg class="i"><use href="#backup"/></svg>Datensicherung</li>
          </ul>
          <i class="grip vgrip"></i>
          <div class="pane">
            <section class="gbox split"><div class="ginner split">
              <h2 class="ghead split">Benutzeroberfläche</h2>
              <div class="gbody">
                <label for="skin">Bedienoberfläche:</label>
                <span class="combo w-skin"><select id="skin"><option>Dunkel</option></select></span>
                <p><span class="split-text">Hinweise: Das Programm muss neu gestartet werden.</span></p>
                <label class="opt"><input class="check blank" type="checkbox"><span class="split-text">Benutzeroberfläche sperren (einfrieren)</span></label>
                <label class="opt"><input class="check blank" type="checkbox"><span class="split-text">Große Icons verwenden</span></label>
              </div>
            </div></section>
            <section class="gbox split"><div class="ginner split">
              <h2 class="ghead split">Spracheinstellungen</h2>
              <div class="gbody lang">
                <label for="lang">Sprachauswahl</label>
                <span class="combo w-lang split"><select id="lang"><option>DE-DE</option></select></span>
              </div>
            </div></section>
          </div>
        </div>
        <div class="rule split"></div>
        <div class="dfoot"><button class="primary">OK</button><button>Abbrechen</button><button>Hilfe</button></div>
      </div>
    </div>
  </section>
</main>

<footer class="statusbar split">
  <div class="group s-coord"><i class="grip"></i><span class="axis">X</span><output>-23.934</output><span class="axis">Y</span><output>19.084</output><span class="axis">Z</span><output>0.00</output><span class="axis">W</span><output>141.432</output><i class="caret push"></i></div>
  <div class="group s-plan"><i class="grip"></i><label for="plan">Liste der Pläne</label><span class="combo grow"><select id="plan"><option></option></select></span><svg class="i"><use href="#hatch"/></svg></div>
  <div class="group s-det light"><label for="det">Architektur-Detaillierungen</label><span class="combo grow"><select id="det"><option>Detail</option></select></span></div>
  <span class="combo s-std light"><select aria-label="Standard"><option>Standardd</option></select></span>
  <span class="combo s-vor light"><select aria-label="Phase"><option>Vorentwurf</option></select></span>
  <div class="group s-plot light"><label for="plot">Plotmaßstab</label><span class="combo grow"><select id="plot"><option>1:50</option></select></span></div>
  <div class="sicons light">
    <button><svg class="i"><use href="#palette"/></svg></button><button><svg class="i"><use href="#win3"/></svg></button><button><svg class="i"><use href="#winb"/></svg></button><button><svg class="i"><use href="#note"/></svg></button><i class="caret"></i><i class="grip"></i><button><svg class="i"><use href="#hash"/></svg></button><button class="on"><svg class="i"><use href="#winy"/></svg></button><button class="on"><svg class="i"><use href="#winb"/></svg></button><button class="on"><svg class="i"><use href="#win3"/></svg></button><button class="on"><svg class="i"><use href="#winb"/></svg></button><button class="on"><svg class="i"><use href="#winb"/></svg></button><button class="on"><svg class="i"><use href="#winb"/></svg></button><button class="on"><svg class="i"><use href="#dots"/></svg></button><button class="on"><svg class="i"><use href="#hash"/></svg></button><button class="on"><svg class="i"><use href="#cross"/></svg></button><button class="on"><svg class="i"><use href="#edge"/></svg></button><button class="on"><svg class="i"><use href="#hatch"/></svg></button><button class="on"><svg class="i"><use href="#bluewin"/></svg></button><button class="on"><svg class="i"><use href="#foliefang"/></svg></button><button><svg class="i"><use href="#screen"/></svg></button><button class="on"><svg class="i"><use href="#circ"/></svg></button><i class="caret"></i>
  </div>
</footer>
</body>
</html>
```
FILE: styles.css
```css
/* The window shows the dark theme left of a slanted cut and the light theme
   right of it. Every .split surface paints the same viewport-wide gradient. */
:root { --cut: 109.4deg; }
*, *::before, *::after { box-sizing: border-box; }
body {
  margin: 0; height: 100vh; overflow: hidden; display: flex; flex-direction: column;
  font: 7px/10px "Open Sans", "Noto Sans", sans-serif; color: #ececec; background: #303030;
}
.split { --d: #303030; --l: #efefef; background: linear-gradient(var(--cut), var(--d) 50%, var(--l) 50%) fixed; }
.split-text {
  background: linear-gradient(var(--cut), #ececec 50%, #444 50%) fixed;
  -webkit-background-clip: text; background-clip: text; -webkit-text-fill-color: transparent;
}
button, input, select, output, kbd { font: inherit; color: inherit; }
button { background: none; border: 0; padding: 0; margin: 0; display: flex; align-items: center; white-space: nowrap; }
ul { list-style: none; margin: 0; padding: 0; }
h1, h2, p, figure { margin: 0; }
label { white-space: nowrap; }
.sprite { position: absolute; width: 0; height: 0; }
.i { width: 10px; height: 10px; flex: none; display: block; }
.x { width: 7px; height: 7px; }
.light { color: #444; }
.on-light { color: #666; }
.grow { flex: 1; }

.grip { width: 9px; flex: none; display: flex; justify-content: center; }
.grip::before { content: ""; width: 1px; height: 7px; background: repeating-linear-gradient(#888 0 1px, transparent 1px 3px); }
.caret { width: 12px; flex: none; display: flex; justify-content: center; }
.caret::before, .combo::after { content: ""; border: 2px solid transparent; border-top-color: #999; border-bottom: 0; }
.combo { position: relative; display: flex; height: 13px; border: 1px solid #5a5a5a; min-width: 0; }
.combo::after { position: absolute; right: 4px; top: 5px; }
.combo select { appearance: none; width: 100%; height: 100%; border: 0; padding: 0 10px 0 2px; background: transparent; }
.light .combo, .combo.light { border-color: #c4c4c4; background: #fff; }
.field { width: 36px; height: 13px; padding: 0 2px; border: 1px solid #5a5a5a; background: transparent; }
.check {
  appearance: none; width: 9px; height: 9px; margin: 0; border: 1px solid #8f8f8f; flex: none;
  display: flex; align-items: center; justify-content: center;
}
.check:checked::before { content: ""; width: 6px; height: 4px; margin-bottom: 1px; border: solid #ddd; border-width: 0 0 1px 1px; rotate: -45deg; }
.radio { appearance: none; width: 9px; height: 9px; margin: 0 4px 0 0; border: 1px solid #444; border-radius: 50%; background: #fff; padding: 1px; }
.radio:checked { background: #444 content-box; }

.titlebar { --d: #242424; --l: #f7f7f7; height: 17px; flex: none; display: flex; align-items: center; gap: 4px; padding: 0 8px 0 1px; border-top: 1px solid #666; }
.apptitle { color: #808080; }
.wincontrols { margin-left: auto; display: flex; gap: 17px; color: #888; }

.ribbon { flex: none; border-bottom: 1px solid #8885; }
.menubar { display: flex; height: 12px; align-items: center; gap: 7px; padding: 2px 0 0 4px; }
.toolbar { display: flex; height: 15px; align-items: center; }
.mid { height: 14px; }
.group { display: flex; align-items: center; height: 100%; flex: none; white-space: nowrap; }
.tb { width: 14px; height: 13px; flex: none; justify-content: center; }
.g-file { width: 160px; color: #aaa; }
.g-file .tb { flex: 0 1 14px; }
.g-pen { width: 140px; }
.g-pen .check { margin: 0 3px 0 2px; }
.dim { color: #888; }
.g-line { width: 114px; padding-left: 4px; gap: 4px; }
.swatch { width: 9px; height: 9px; background: #0b16f0; border: 1px solid #ddd; }
.stroke::before { content: ""; position: absolute; left: 43px; right: 10px; top: 5px; height: 1px; background: #ddd; }
.g-dist { width: 69px; padding-left: 3px; justify-content: space-between; }
.g-val { width: 52px; padding-left: 1px; justify-content: space-between; }
.g-val label { color: #aaa; }
.g-val .field { width: 34px; }
.g-layer { width: 52px; gap: 1px; padding-left: 2px; }
.objfolie { --d: #3c3c3c; --l: #cfcfcf; width: 67px; height: 13px; margin: 0 2px 0 3px; gap: 2px; }
.g-folie { width: 102px; }
.g-coord { width: 129px; color: #555; }
.g-coord label { display: flex; align-items: center; padding: 0 5px 0 2px; }
.g-user { width: 154px; gap: 2px; }
.end { margin-left: auto; }
.w-menu { width: 45px; }
.w-unit { width: 54px; }
.w-polar { width: 74px; }
.w-scale { width: 44px; }
.ic { margin: 0 3px 0 2px; }
.g-status { width: 459px; }
.wide { width: 20px; }
.prompt { display: flex; align-items: center; gap: 4px; height: 100%; width: 339px; border: solid #999; border-width: 0 1px 0 2px; }
.prompt span { margin-left: 9px; }

.main { flex: 1; min-height: 0; display: flex; background: #1b1b1b; }
.phead { display: flex; align-items: center; height: 18px; flex: none; background: #262626; padding: 4px 6px 0 4px; gap: 11px; color: #ddd; }
.phead b { flex: 1; color: #fff; white-space: nowrap; }
.phead .i { width: 8px; height: 7px; }
.menupanel { width: 79px; flex: none; display: flex; flex-direction: column; padding: 0 2px 1px; background: #2f2f2f; border-right: 1px solid #1c1c1c; }
.mbtn { justify-content: center; height: 13px; border: solid; border-color: #ddd #444 #555 #ddd; border-width: 1px; background: #262626; flex: none; }
.mlist { display: grid; grid-auto-rows: 1fr; height: 262px; margin-top: 5px; }
.mrow { display: flex; align-items: center; gap: 2px; width: 72px; margin-left: 1px; padding-left: 1px; white-space: nowrap; }
.mrow kbd { width: 11px; color: #aaa; font: 8px/10px Lato, sans-serif; }
.mrow .check { margin: 0 1px 0 0; }
.mrow i { width: 10px; }
.mrow.sel { background: #99d1ff; color: #123; margin-top: 1px; margin-bottom: 1px; }
.mbuttons { margin-top: auto; height: 143px; display: grid; grid-auto-rows: 1fr; gap: 1px; }
.mbuttons .mbtn { height: auto; }

.explorer { width: 261px; flex: none; display: flex; flex-direction: column; background: #303030; margin-left: 1px; }
.tabs, .tree, .files, .doctabs { font-family: Lato, "Open Sans", sans-serif; }
.tabs { display: flex; height: 15px; flex: none; background: #262626; align-items: stretch; }
.tabs button { padding: 0 8px; }
.tabs .active { background: #303030; border: solid #444; border-width: 0 1px; box-shadow: inset 0 1px #2a7fc4; padding: 0 6px; }
.tabs .last { padding-right: 0; }
.scroll { margin-left: auto; display: flex; gap: 9px; padding: 5px 3px 0 0; }
.scroll i { border: 2px solid transparent; border-left-color: #ddd; border-right: 0; height: 4px; }
.treebox { display: flex; height: 223px; flex: none; border-top: 1px solid #777; border-bottom: 2px solid #f2f2f2; }
.gutter { width: 7px; border-right: 1px solid #777; }
.treecol { flex: 1; display: flex; flex-direction: column; background: #262626; }
.filter { height: 15px; border-bottom: 1px solid #666; }
.tree { flex: 1; display: grid; grid-auto-rows: 1fr; min-height: 0; }
.tree li { display: flex; align-items: center; gap: 2px; padding-left: 3px; min-height: 0; }
.tree li:nth-child(even) { background: #323232; }
.tree li::before { content: ""; width: 4px; height: 4px; border: solid #eee; border-width: 1px 1px 0 0; rotate: 45deg; margin-right: 3px; }
.inhalt-tab { height: 14px; flex: none; display: flex; background: #262626; }
.inhalt-tab button { padding: 0 4px; background: #303030; border-right: 1px solid #555; }
.inhalt-tools { height: 15px; flex: none; display: flex; align-items: center; border-top: 1px solid #444; }
.pressed { background: #505050; }
.files {
  flex: 1; min-height: 0; margin: 0 1px 4px; border: 1px solid #5c5c5c; padding: 7px 42px 0 1px;
  display: grid; grid-template-columns: 1fr 1fr; grid-auto-rows: 85px; text-align: center; background: #303030;
}
.big { width: 54px; height: 43px; display: block; margin: 0 auto 11px; }

.work { flex: 1; min-width: 0; display: flex; flex-direction: column; margin-left: 3px; }
.doctabs { --l: #fff; height: 14px; flex: none; display: flex; border-bottom: 1px solid #8886; }
.doctabs button { gap: 3px; padding: 0 3px 0 2px; border-right: 1px solid #555; }
.doctabs .active { background: #232323; padding-right: 4px; }
.doctabs .x { width: 6px; margin-left: 4px; }
.canvas { --d: #000; --l: #fff; flex: 1; min-height: 0; position: relative; overflow: hidden; }
.paper {
  position: absolute; left: 169px; top: 77px; width: 287px; height: 417px;
  background: linear-gradient(90deg, #bbb 1px, transparent 1px) 0 0 / 13px 13px, linear-gradient(#bbb 1px, transparent 1px) 0 0 / 13px 13px;
  clip-path: polygon(100% 0, 100% 100%, 0 100%, 0 75%, 100px 0);
}
.axes { position: absolute; left: 19px; bottom: 13px; width: 16px; height: 16px; }

.win { position: absolute; border: 1px solid #1d659f; }
.win-cursor { left: 0; top: 4px; width: 264px; background: #303030; }
.win-planes { left: 264px; top: 4px; width: 99px; --l: #f7f7f7; box-shadow: 1px 1px 1px #5b9bd5; }
.win-snap { right: 4px; top: 339px; width: 93px; background: #f0f0f0; color: #333; border-color: #5b9bd5; padding: 0 1px 1px; }
.whead { display: flex; align-items: center; height: 13px; padding: 0 4px 0 2px; }
.win-snap .whead { height: 15px; }
.whead span { margin-right: auto; white-space: nowrap; }
.whead .x { margin-left: 6px; color: #999; }
.wtools { display: flex; height: 14px; color: #999; }
.wtools button { flex: 1; justify-content: center; }
.snaps { display: grid; grid-auto-rows: 12px; gap: 1px; justify-items: start; }
.snaps button { gap: 3px; padding: 0 2px 0 1px; }
.snaps .on { background: #c9c9c9; }

.dialog {
  --d: #242424; --l: #f7f7f7; position: absolute; left: 20px; top: 56px; width: 416px;
  border-radius: 4px; box-shadow: 0 2px 8px #0006; padding-left: 1px;
}
.dtitle { display: flex; justify-content: space-between; align-items: center; height: 12px; padding: 0 3px 0 6px; }
.dtitle button { color: #555; }
.dtitle .i { width: 8px; height: 8px; }
h1 { font-size: 10px; line-height: 14px; text-align: center; margin: 5px 0; color: #fff; }
.rule { --d: #d8d8d8; --l: #c6c6c6; height: 1px; }
.dbody { display: flex; }
.opts { width: 128px; height: 287px; display: grid; grid-auto-rows: 1fr; background: #303030; flex: none; }
.opts li { display: flex; align-items: center; gap: 2px; white-space: nowrap; min-width: 0; min-height: 0; }
.opts li::before { content: ""; width: 4px; height: 4px; flex: none; margin: 0 1px 0 3px; }
.opts .openrow::before { border: solid #ddd; border-width: 0 1px 1px 0; rotate: 45deg; }
.opts .l1 { padding-left: 11px; }
.opts .l2 { padding-left: 22px; }
.sel span { background: #484848; }
.vgrip { width: 4px; align-self: center; }
.pane { flex: 1; padding: 4px 12px 0 4px; display: grid; gap: 4px; align-content: start; }
.gbox { --d: #3a3a3a; --l: #e2e2e2; padding: 1px; }
.ginner { --d: #242424; --l: #f7f7f7; }
.ghead { --d: #404040; --l: #e3e3e3; font-size: 7px; line-height: 15px; padding-left: 5px; color: #f2f2f2; }
.gbody { padding: 5px 6px 4px; display: grid; gap: 5px; justify-items: start; }
.gbody p { line-height: 12px; }
.gbody > label { line-height: 10px; }
.gbody.lang { padding: 5px 6px 13px; }
.w-skin { width: 62px; height: 13px; }
.w-lang { width: 74px; --l: #fff; }
.opt { display: flex; align-items: center; gap: 4px; }
.blank { background: #333; border-color: #4c4c4c; }
.dfoot { display: flex; justify-content: flex-end; gap: 6px; padding: 5px 11px 7px; color: #444; }
.dfoot button { width: 51px; height: 16px; justify-content: center; border: 1px solid #bbb; background: #fff; }
.dfoot .primary { border-color: #2f74b5; }

.statusbar { --d: #2b2b2b; height: 13px; flex: none; display: flex; align-items: center; border-top: 1px solid #8883; }
.statusbar .combo { height: 12px; }
.statusbar .combo::after { top: 4px; }
.s-coord { width: 301px; }
.axis { width: 9px; height: 9px; line-height: 8px; text-align: center; background: #4a4a4a; color: #ccc; margin-left: 2px; }
output { width: 49px; text-align: right; }
.push { margin-left: auto; }
.s-plan { width: 167px; gap: 2px; }
.s-det { width: 149px; gap: 3px; }
.s-std { width: 48px; }
.s-vor { width: 83px; }
.s-plot { width: 90px; gap: 2px; padding-left: 2px; }
.sicons { display: flex; flex: 1; align-items: center; height: 100%; }
.sicons button { flex: 1; height: 100%; justify-content: center; }
.sicons .on { background: #cdcdcd; }
```
